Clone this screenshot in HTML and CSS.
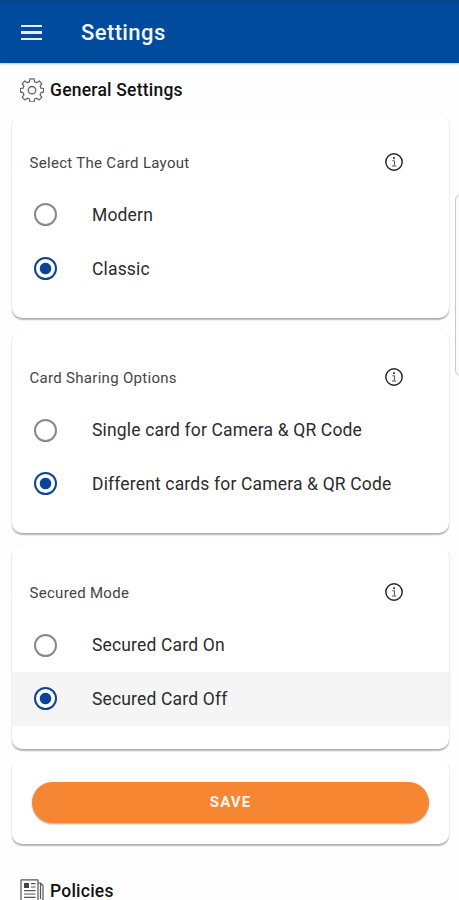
FILE: index.html
```html
<!DOCTYPE html>
<html lang="en">
<head>
<meta charset="utf-8">
<title>Settings</title>
<link rel="stylesheet" href="styles.css">
</head>
<body>
<svg width="0" height="0" class="defs">
  <symbol id="info" viewBox="0 0 20 20">
    <circle cx="10" cy="10" r="8.2" fill="none" stroke="#222" stroke-width="1.4"/>
    <circle cx="10" cy="6.2" r="1.1" fill="#444"/>
    <path d="M8.3 8.8h2.2v4.8M8 14h4.3" fill="none" stroke="#555" stroke-width="1"/>
  </symbol>
</svg>
<header class="bar">
  <div class="menu"><span></span><span></span><span></span></div>
  <h1>Settings</h1>
</header>
<main>
  <h2 class="section">
    <svg class="section-icon" viewBox="0 0 24 24" fill="none" stroke="#666" stroke-width="1.3" stroke-linejoin="round"><path d="M10 .8h4l.6 3 2.1.9 2.6-1.7 2.5 2.6-1.7 2.5.9 2.1 2.7.5v3.3l-2.7.7-.9 2.1 1.7 2.6-2.6 2.5-2.5-1.7-2.1.9-.6 2.8h-4l-.6-2.8-2.1-.9-2.5 1.7-2.6-2.5 1.7-2.6-.9-2.1-2.6-.7v-3.3l2.6-.5.9-2.1-1.7-2.5 2.6-2.6 2.5 1.7 2.1-.9z"/><circle cx="12" cy="12.2" r="3.7"/></svg>
    <span>General Settings</span>
  </h2>

  <section class="card">
    <div class="card-head"><h3>Select The Card Layout</h3><svg class="info"><use href="#info"/></svg></div>
    <div class="option"><i class="radio"></i><span>Modern</span></div>
    <div class="option"><i class="radio on"></i><span>Classic</span></div>
  </section>

  <section class="card">
    <div class="card-head"><h3>Card Sharing Options</h3><svg class="info"><use href="#info"/></svg></div>
    <div class="option"><i class="radio"></i><span>Single card for Camera &amp; QR Code</span></div>
    <div class="option"><i class="radio on"></i><span>Different cards for Camera &amp; QR Code</span></div>
  </section>

  <section class="card">
    <div class="card-head"><h3>Secured Mode</h3><svg class="info"><use href="#info"/></svg></div>
    <div class="option"><i class="radio"></i><span>Secured Card On</span></div>
    <div class="option active"><i class="radio on"></i><span>Secured Card Off</span></div>
  </section>

  <section class="card save-card"><button class="save">SAVE</button></section>

  <h2 class="section policies">
    <svg class="section-icon" viewBox="0 0 24 24" fill="none" stroke="#555" stroke-width="1.2"><path d="M18 22.5H2.5Q1 22.5 1 21V1.5Q1 .8 1.7.8H17.3Q18 .8 18 1.5V21q0 1.5 1.5 1.5h2q1.5 0 1.5-1.5V6.5L20.5 4H18M20.5 4v16"/><path d="M4 11.6h11.5M4 15h11.5M4 18.4h11.5M11 4.7h4.5M11 8h4.5"/><path d="M4 4h5v5H4z" fill="#444" stroke="none"/></svg>
    <span>Policies</span>
  </h2>
</main>
<div class="edge-handle"></div>
</body>
</html>
```
FILE: styles.css
```css
* { box-sizing: border-box; margin: 0; padding: 0; }
html, body { height: 900px; overflow: hidden; }
body { background: #fefefe; font-family: Roboto, sans-serif; color: #222; position: relative; }
.defs { position: absolute; }
.bar {
  height: 63px; padding: 1px 22px 0 21px; display: flex; align-items: center;
  background: #004b9e; border-top: 1px solid #0d427c;
  box-shadow: 0 1px 2px rgba(0, 0, 0, .25);
}
.menu { width: 21px; display: flex; flex-direction: column; gap: 4px; }
.menu span { height: 2.4px; background: #e8effa; }
h1 { margin-left: 39px; font-size: 22px; font-weight: 500; line-height: 28px; color: #f2f6ff; letter-spacing: .4px; }
.section { display: flex; align-items: center; gap: 6px; height: 52px; padding: 2px 0 0 20px; font-size: 17.5px; font-weight: 500; letter-spacing: .22px; color: #111; }
.section-icon { width: 24px; height: 24px; flex: none; }
.card {
  width: 437px; height: 203.2px; margin: 0 0 12px 12px; padding-top: 20px;
  background: #fff; border-radius: 10px;
  box-shadow: 0 1.5px 1.5px rgba(0, 0, 0, .28), 0 1px 2px rgba(0, 0, 0, .05);
}
.card-head { display: flex; justify-content: space-between; align-items: center; height: 53.2px; padding: 0 45px 0 17.5px; }
h3 { padding-top: 2px; font-size: 15px; font-weight: 400; letter-spacing: .3px; color: #444; }
.info { width: 20px; height: 20px; }
.option { display: flex; align-items: center; height: 53.6px; padding-left: 22px; font-size: 17.5px; letter-spacing: .16px; color: #2c2c2c; }
.option.active { background: #f5f5f5; }
.radio { width: 23px; height: 23px; margin-right: 35px; flex: none; border: 2px solid #888; border-radius: 50%; }
.radio.on { border-color: #0b429b; background: radial-gradient(circle, #0b429b 5.3px, #fff 6.2px); }
.save-card { height: 85px; margin-top: -2px; padding: 23px 20px; }
.save {
  display: block; width: 397px; height: 41px; border: 0; border-radius: 21px;
  background: #f68632; color: #fff8ef; font: 700 15px Roboto, sans-serif; letter-spacing: 1.1px;
  box-shadow: 0 1px 2px rgba(0, 0, 0, .35);
}
.policies { margin-top: 20px; }
.edge-handle {
  position: absolute; left: 455px; top: 194px; width: 12px; height: 182px;
  border: 1px solid #c9c9c9; border-radius: 6px; background: #fbfbfb;
}
```
